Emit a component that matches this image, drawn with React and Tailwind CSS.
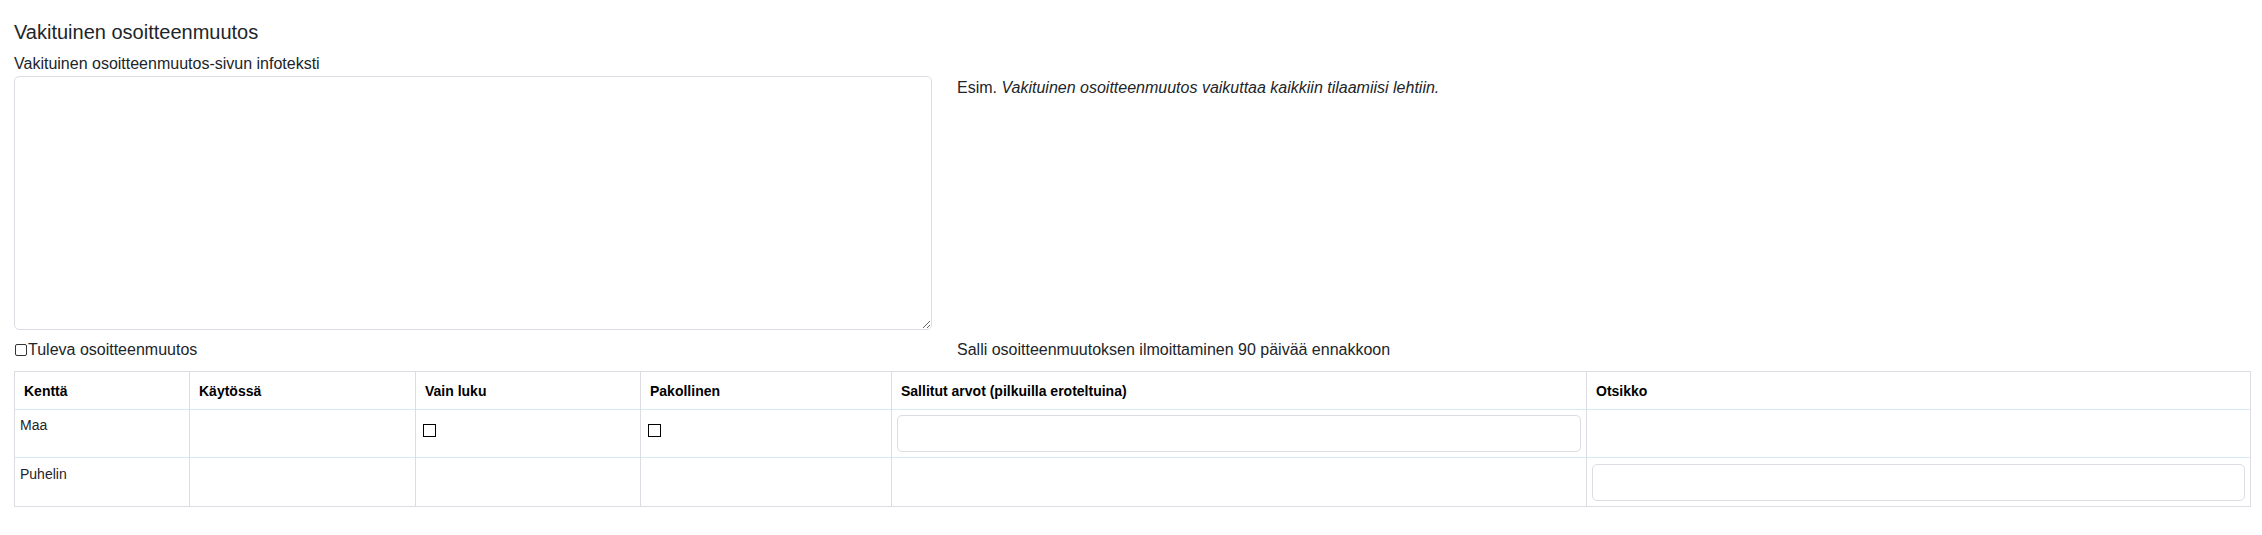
import React from "react";

const FONT = { fontFamily: '"Liberation Sans", Arial, sans-serif' };

// Column widths taken from the reference table (total 2236px)
const COLUMNS = [
  { label: "Kenttä", width: "w-[175px]" },
  { label: "Käytössä", width: "w-[226px]" },
  { label: "Vain luku", width: "w-[225px]" },
  { label: "Pakollinen", width: "w-[251px]" },
  { label: "Sallitut arvot (pilkuilla eroteltuina)", width: "w-[695px]" },
  { label: "Otsikko", width: "w-[664px]" },
];

function Box() {
  return (
    <input
      type="checkbox"
      className="appearance-none block w-[13px] h-[13px] border border-black bg-white rounded-none m-0"
    />
  );
}

function TextInput() {
  return (
    <input
      type="text"
      className="block w-full h-[37px] border border-[#dcdde3] rounded-[5px] px-2 outline-none bg-white"
    />
  );
}

export default function App() {
  return (
    <div style={FONT} className="bg-white min-h-[535px] pl-[14px] pr-[12px] pt-[20px] text-[#212529]">
      {/* ── Title + label ── */}
      <h2 className="text-[20px] leading-[24px] font-normal">Vakituinen osoitteenmuutos</h2>
      <label className="block mt-[10px] text-[16px] leading-[20px]">
        Vakituinen osoitteenmuutos-sivun infoteksti
      </label>

      {/* ── Textarea + example ── */}
      <div className="flex mt-[2px]">
        <textarea className="block w-[918px] h-[254px] border border-[#dcdde3] rounded-[5px] resize bg-white outline-none shrink-0" />
        <p className="ml-[25px] pt-[2px] text-[16px] leading-[20px]">
          Esim. <i>Vakituinen osoitteenmuutos vaikuttaa kaikkiin tilaamiisi lehtiin.</i>
        </p>
      </div>

      {/* ── Checkbox row ── */}
      <div className="flex mt-[10px] text-[16px] leading-[20px]">
        <label className="flex items-center w-[943px] shrink-0">
          <input
            type="checkbox"
            className="appearance-none block w-[12px] h-[12px] border border-[#333] rounded-[2px] bg-white m-0 ml-px mr-[1px]"
          />
          Tuleva osoitteenmuutos
        </label>
        <span>Salli osoitteenmuutoksen ilmoittaminen 90 päivää ennakkoon</span>
      </div>

      {/* ── Field table ── */}
      <table className="mt-[11px] w-[2236px] table-fixed border-collapse border border-[#dcdde3] text-[14px] leading-[20px]">
        <thead>
          <tr className="border-b border-[#d5ebf7]">
            {COLUMNS.map((c) => (
              <th
                key={c.label}
                className={`${c.width} border-x border-[#dcdde3] text-left font-bold text-black px-[9px] pt-[9px] pb-[8px] align-middle`}
              >
                {c.label}
              </th>
            ))}
          </tr>
        </thead>
        <tbody>
          <tr className="border-b border-[#d5ebf7]">
            <td className="border-x border-[#dcdde3] p-[5px] align-top">Maa</td>
            <td className="border-x border-[#dcdde3] p-[5px] align-top"></td>
            <td className="border-x border-[#dcdde3] p-[5px] align-top">
              <div className="pt-[9px] pl-[2px]"><Box /></div>
            </td>
            <td className="border-x border-[#dcdde3] p-[5px] align-top">
              <div className="pt-[9px] pl-[2px]"><Box /></div>
            </td>
            <td className="border-x border-[#dcdde3] p-[5px] align-top"><TextInput /></td>
            <td className="border-x border-[#dcdde3] p-[5px] align-top"></td>
          </tr>
          <tr>
            <td className="border-x border-[#dcdde3] p-[5px] pt-[6px] align-top">Puhelin</td>
            <td className="border-x border-[#dcdde3] p-[5px] align-top"></td>
            <td className="border-x border-[#dcdde3] p-[5px] align-top"></td>
            <td className="border-x border-[#dcdde3] p-[5px] align-top"></td>
            <td className="border-x border-[#dcdde3] p-[5px] align-top"></td>
            <td className="border-x border-[#dcdde3] p-[5px] pt-[6px] align-top"><TextInput /></td>
          </tr>
        </tbody>
      </table>
    </div>
  );
}
